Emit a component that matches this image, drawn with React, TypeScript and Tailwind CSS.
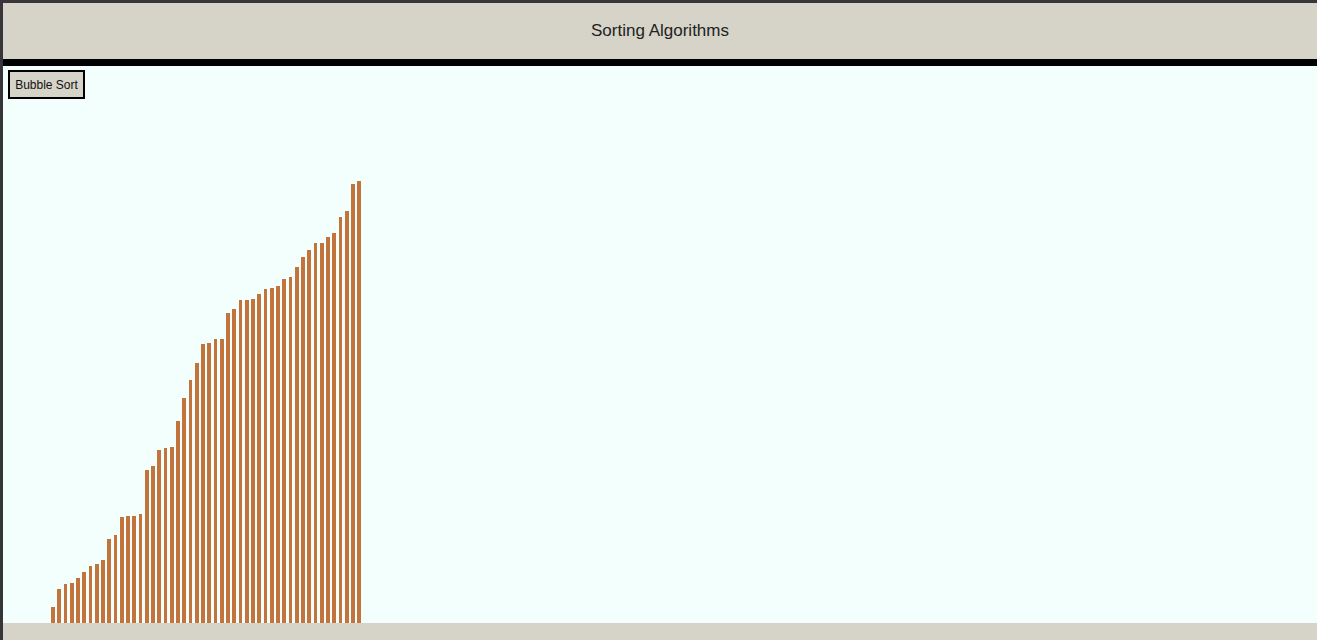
import React from "react";

const heights = [16,34,39,40,45,51,57,59,63,84,88,106,107,107,109,153,157,173,175,176,202,225,243,260,279,280,284,284,310,314,323,323,324,329,334,335,337,344,346,356,366,373,380,380,386,390,406,412,439,442];

export default function App() {
  return (
    <div className="h-[640px] w-full flex flex-col overflow-hidden border-l-[3px] border-t-[3px] border-[#36363a] font-['Liberation_Sans',Arial,sans-serif]">
      <header className="h-[63px] shrink-0 bg-[#d6d3c8] border-b-[7px] border-black flex items-center justify-center pb-[2px]">
        <h1 className="text-[17px] text-[#222222] leading-none">Sorting Algorithms</h1>
      </header>
      <main className="flex-1 bg-[#f2fffd] flex flex-col min-h-0">
        <div className="pl-[5px] pt-[4px]">
          <button className="h-[29px] w-[77px] bg-[#d6d3c8] border-2 border-black text-[12px] text-[#111111] flex items-center justify-center">
            Bubble Sort
          </button>
        </div>
        <div className="flex-1 flex items-end gap-[2.5px] pl-[48px]">
          {heights.map((h, i) => (
            <div key={i} className="w-[3.75px] shrink-0 bg-[#c3743c]" style={{ height: `${h}px` }} />
          ))}
        </div>
      </main>
      <footer className="h-[17px] shrink-0 bg-[#d6d3c8]" />
    </div>
  );
}
